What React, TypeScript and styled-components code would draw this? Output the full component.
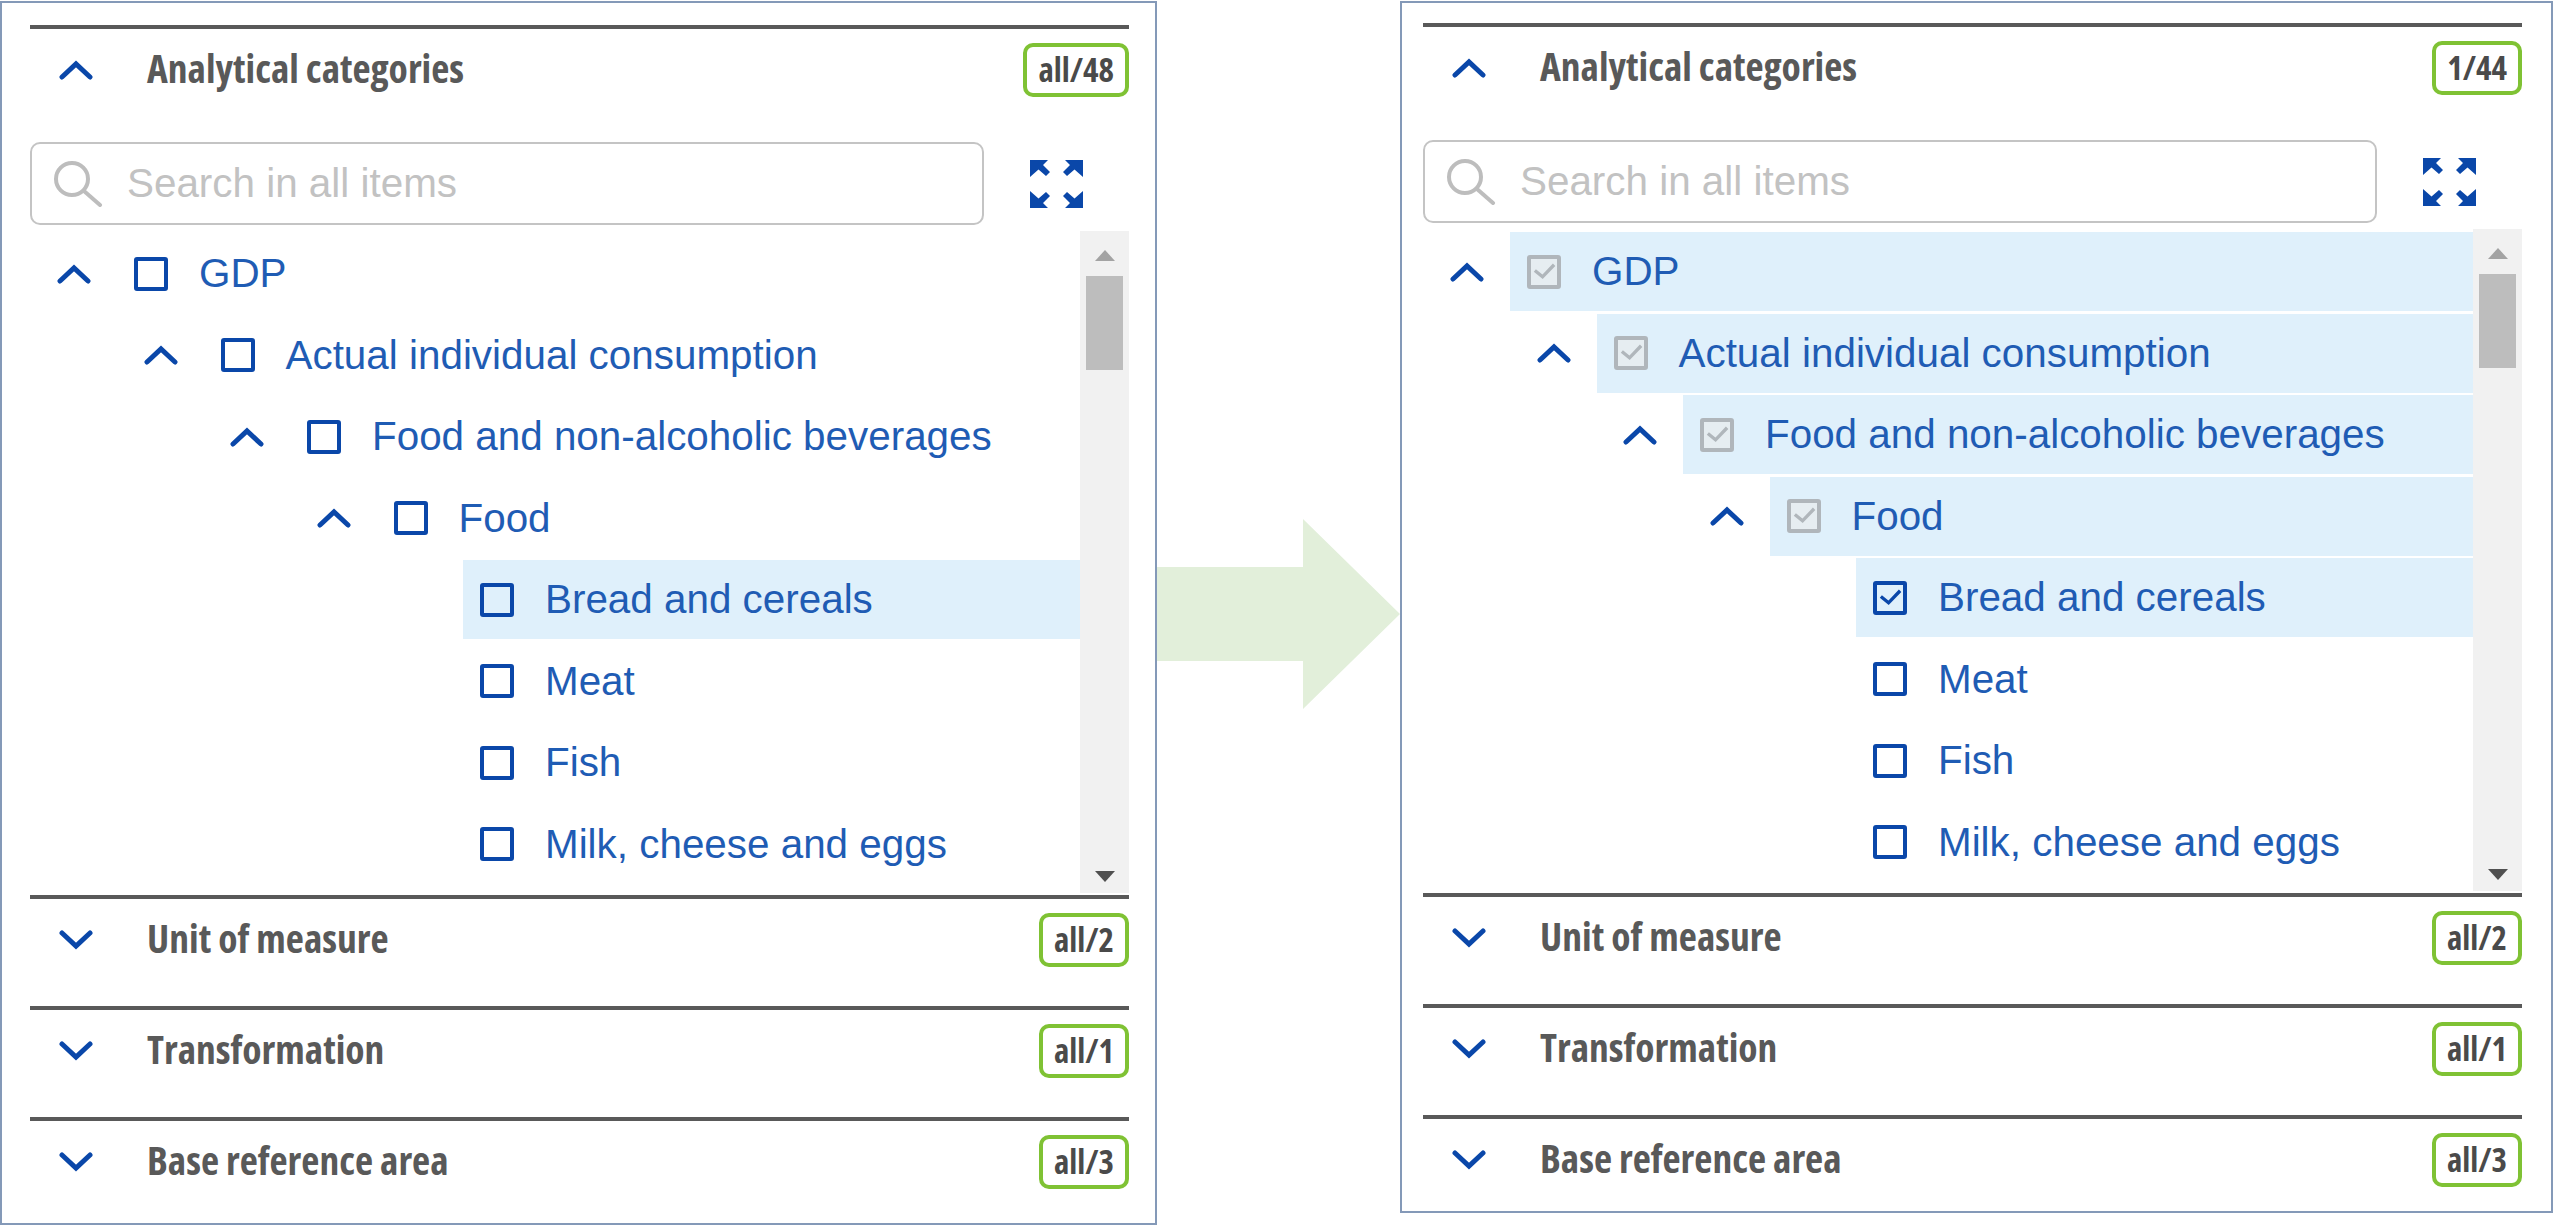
import React from "react";
import styled, { createGlobalStyle } from "styled-components";

const GlobalStyle = createGlobalStyle`
  html, body {
    margin: 0;
    padding: 0;
    background: #fff;
  }
`;

const BLUE = "#0a47a9";

type TreeItem = {
  label: string;
  level: number;
  branch?: boolean;
  selected?: boolean;
  state?: "empty" | "partial" | "checked";
};

const leftItems: TreeItem[] = [
  { label: "GDP", level: 0, branch: true },
  { label: "Actual individual consumption", level: 1, branch: true },
  { label: "Food and non-alcoholic beverages", level: 2, branch: true },
  { label: "Food", level: 3, branch: true },
  { label: "Bread and cereals", level: 4, selected: true },
  { label: "Meat", level: 4 },
  { label: "Fish", level: 4 },
  { label: "Milk, cheese and eggs", level: 4 },
];

const rightItems: TreeItem[] = [
  { label: "GDP", level: 0, branch: true, selected: true, state: "partial" },
  { label: "Actual individual consumption", level: 1, branch: true, selected: true, state: "partial" },
  { label: "Food and non-alcoholic beverages", level: 2, branch: true, selected: true, state: "partial" },
  { label: "Food", level: 3, branch: true, selected: true, state: "partial" },
  { label: "Bread and cereals", level: 4, selected: true, state: "checked" },
  { label: "Meat", level: 4 },
  { label: "Fish", level: 4 },
  { label: "Milk, cheese and eggs", level: 4 },
];

const Chevron = ({ up }: { up?: boolean }) => (
  <ChevronSvg viewBox="0 0 34 20">
    <path d={up ? "M3 17 L17 4 L31 17" : "M3 3 L17 16 L31 3"} />
  </ChevronSvg>
);

const ExpandIcon = () => (
  <ExpandSvg viewBox="0 0 53 48">
    <path d="M0 0 H18 L13 5 L20 12 L16 16 L8.5 9.5 L0 17 Z" />
    <path d="M53 0 H35 L40 5 L33 12 L37 16 L44.5 9.5 L53 17 Z" />
    <path d="M0 48 H18 L13 43 L20 36 L16 32 L8.5 38.5 L0 31 Z" />
    <path d="M53 48 H35 L40 43 L33 36 L37 32 L44.5 38.5 L53 31 Z" />
  </ExpandSvg>
);

const SearchIcon = () => (
  <SearchSvg viewBox="0 0 50 46">
    <circle cx="19" cy="18" r="16" />
    <path d="M31 30 L47 44" />
  </SearchSvg>
);

function Tree({ items }: { items: TreeItem[] }) {
  return (
    <TreeWrap>
      <Rows>
        {items.map((item) => (
          <Row key={item.label} $level={item.level}>
            <ChevronSlot>{item.branch && <Chevron up />}</ChevronSlot>
            <RowBody $selected={item.selected}>
              <Box $state={item.state ?? "empty"}>
                {item.state && item.state !== "empty" && (
                  <svg viewBox="0 0 27 27" width="26" height="26">
                    <path d="M4 12 L12 18.5 L24 6" />
                  </svg>
                )}
              </Box>
              <Label>{item.label}</Label>
            </RowBody>
          </Row>
        ))}
      </Rows>
      <Scrollbar>
        <ArrowUp />
        <Thumb />
        <ArrowDown />
      </Scrollbar>
    </TreeWrap>
  );
}

function FilterPanel({
  items,
  count,
  $right,
}: {
  items: TreeItem[];
  count: string;
  $right?: boolean;
}) {
  return (
    <Panel $right={$right}>
      <Section>
        <SectionHead>
          <HeadChevron>
            <Chevron up />
          </HeadChevron>
          <Title>Analytical categories</Title>
          <Badge>{count}</Badge>
        </SectionHead>
        <SearchRow>
          <SearchBox>
            <SearchIcon />
            <SearchText>Search in all items</SearchText>
          </SearchBox>
          <ExpandIcon />
        </SearchRow>
        <Tree items={items} />
      </Section>
      <Section>
        <SectionHead>
          <HeadChevron>
            <Chevron />
          </HeadChevron>
          <Title>Unit of measure</Title>
          <Badge>all/2</Badge>
        </SectionHead>
      </Section>
      <Section>
        <SectionHead>
          <HeadChevron>
            <Chevron />
          </HeadChevron>
          <Title>Transformation</Title>
          <Badge>all/1</Badge>
        </SectionHead>
      </Section>
      <Section>
        <SectionHead>
          <HeadChevron>
            <Chevron />
          </HeadChevron>
          <Title>Base reference area</Title>
          <Badge>all/3</Badge>
        </SectionHead>
      </Section>
    </Panel>
  );
}

export default function App() {
  return (
    <Page>
      <GlobalStyle />
      <FilterPanel items={leftItems} count="all/48" />
      <BigArrow viewBox="0 0 243 190">
        <path d="M0 48 H146 V0 L243 95 L146 190 V142 H0 Z" />
      </BigArrow>
      <FilterPanel items={rightItems} count="1/44" $right />
    </Page>
  );
}

const Page = styled.div`
  display: flex;
  align-items: flex-start;
  width: 2554px;
  height: 1226px;
  padding-top: 1px;
  box-sizing: border-box;
  overflow: hidden;
`;

const Panel = styled.div<{ $right?: boolean }>`
  box-sizing: border-box;
  flex: none;
  width: ${(p) => (p.$right ? "1153px" : "1157px")};
  height: ${(p) => (p.$right ? "1212px" : "1224px")};
  border: 2px solid #8499b8;
  padding: ${(p) => (p.$right ? "20px 29px 0 21px" : "22px 26px 0 28px")};
  background: #fff;
`;

const BigArrow = styled.svg`
  flex: none;
  width: 243px;
  height: 190px;
  margin-top: 518px;
  fill: #e2efda;
`;

const Section = styled.section`
  border-top: 4px solid #595959;
`;

const SectionHead = styled.div`
  display: flex;
  align-items: center;
  height: 107px;
  padding-bottom: 26px;
  box-sizing: border-box;
`;

const HeadChevron = styled.div`
  flex: none;
  width: 117px;
  padding-left: 29px;
  box-sizing: border-box;
  display: flex;
`;

const ChevronSvg = styled.svg`
  width: 34px;
  height: 20px;
  fill: none;
  stroke: ${BLUE};
  stroke-width: 5;
  stroke-linecap: round;
  stroke-linejoin: miter;
`;

const Title = styled.div`
  flex: 1;
  padding-bottom: 4px;
  font-family: "Open Sans", "Liberation Sans", sans-serif;
  font-stretch: 80%;
  font-weight: 700;
  font-size: 39.5px;
  color: #595959;
`;

const Badge = styled.div`
  flex: none;
  box-sizing: border-box;
  height: 54px;
  padding: 0 11px;
  display: flex;
  align-items: center;
  justify-content: center;
  border: 4px solid #7fc234;
  border-radius: 10px;
  font-family: "Open Sans", "Liberation Sans", sans-serif;
  font-stretch: 80%;
  font-weight: 700;
  font-size: 33px;
  color: #4a4a4a;
`;

const SearchRow = styled.div`
  display: flex;
  align-items: center;
  margin-top: 6px;
  height: 83px;
`;

const SearchBox = styled.div`
  box-sizing: border-box;
  flex: none;
  width: 954px;
  height: 83px;
  display: flex;
  align-items: center;
  padding-left: 21px;
  border: 2px solid #c4c4c4;
  border-radius: 10px;
  margin-right: 46px;
`;

const SearchSvg = styled.svg`
  flex: none;
  width: 50px;
  height: 46px;
  margin-right: 24px;
  fill: none;
  stroke: #bdbdbd;
  stroke-width: 4;
  stroke-linecap: round;
`;

const SearchText = styled.span`
  font-family: "Liberation Sans", Arial, sans-serif;
  font-size: 40.4px;
  color: #c2c2c2;
`;

const ExpandSvg = styled.svg`
  flex: none;
  width: 53px;
  height: 48px;
  fill: ${BLUE};
`;

const TreeWrap = styled.div`
  display: flex;
  height: 662px;
  margin-top: 6px;
  margin-bottom: 2px;
`;

const Rows = styled.div`
  flex: 1;
  display: flex;
  flex-direction: column;
  gap: 2.5px;
  padding-top: 3px;
  overflow: hidden;
`;

const Row = styled.div<{ $level: number }>`
  flex: none;
  display: flex;
  height: 79px;
  margin-left: ${(p) => p.$level * 86.5}px;
`;

const ChevronSlot = styled.div`
  flex: none;
  width: 87px;
  box-sizing: border-box;
  padding-left: 27px;
  display: flex;
  align-items: center;
`;

const RowBody = styled.div<{ $selected?: boolean }>`
  flex: 1;
  display: flex;
  align-items: center;
  padding-left: 17px;
  background: ${(p) => (p.$selected ? "#dff0fb" : "transparent")};
`;

const Box = styled.div<{ $state: "empty" | "partial" | "checked" }>`
  flex: none;
  box-sizing: border-box;
  width: 34px;
  height: 34px;
  margin-right: 31px;
  border: 4px solid ${(p) => (p.$state === "partial" ? "#b0b6bb" : BLUE)};
  border-radius: 3px;
  background: ${(p) => (p.$state === "partial" ? "#e6edf1" : "transparent")};

  svg {
    display: block;
    fill: none;
    stroke: ${(p) => (p.$state === "partial" ? "#b0b6bb" : BLUE)};
    stroke-width: 3.5;
  }
`;

const Label = styled.span`
  font-family: "Liberation Sans", Arial, sans-serif;
  font-size: 40.4px;
  color: #1f5cb4;
  white-space: nowrap;
`;

const Scrollbar = styled.div`
  flex: none;
  width: 49px;
  background: #f1f1f1;
  display: flex;
  flex-direction: column;
  align-items: center;
  padding-top: 19px;
  box-sizing: border-box;
`;

const ArrowUp = styled.div`
  width: 0;
  height: 0;
  border-left: 10px solid transparent;
  border-right: 10px solid transparent;
  border-bottom: 11px solid #a3a3a3;
`;

const Thumb = styled.div`
  width: 37px;
  height: 94px;
  margin-top: 15px;
  background: #bdbdbd;
`;

const ArrowDown = styled.div`
  margin-top: auto;
  margin-bottom: 11px;
  width: 0;
  height: 0;
  border-left: 10px solid transparent;
  border-right: 10px solid transparent;
  border-top: 11px solid #505050;
`;
